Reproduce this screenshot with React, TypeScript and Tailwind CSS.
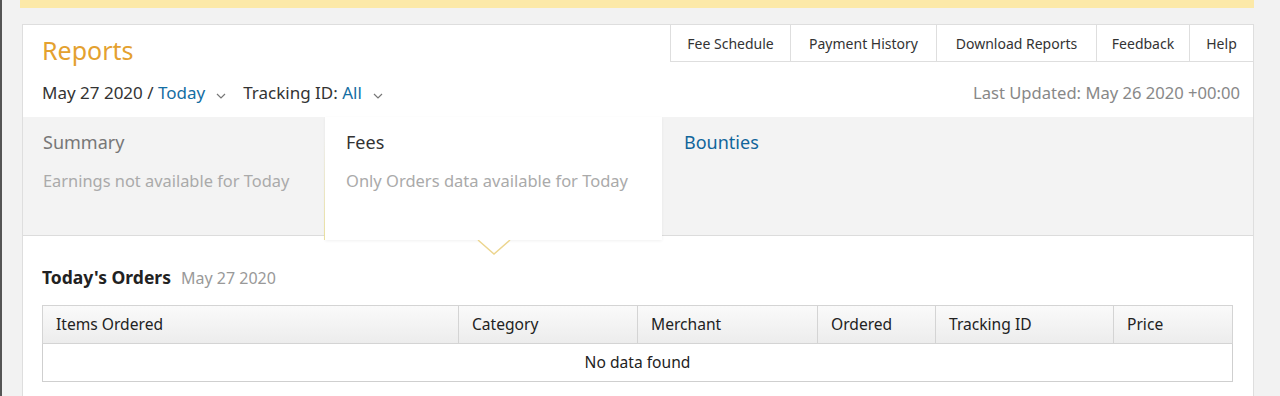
import React from 'react';

const tabs = [
  { label: 'Fee Schedule', w: 'w-[120px]' },
  { label: 'Payment History', w: 'w-[146px]' },
  { label: 'Download Reports', w: 'w-[160px]' },
  { label: 'Feedback', w: 'w-[93px]' },
  { label: 'Help', w: 'w-[64px]' },
];

const columns = [
  { label: 'Items Ordered', w: 'w-[416px]' },
  { label: 'Category', w: 'w-[179px]' },
  { label: 'Merchant', w: 'w-[180px]' },
  { label: 'Ordered', w: 'w-[118px]' },
  { label: 'Tracking ID', w: 'w-[178px]' },
  { label: 'Price', w: 'w-[119px]' },
];

function Chevron() {
  return (
    <svg width="10" height="6" viewBox="0 0 10 6" className="ml-[11px] mt-[5px]">
      <path d="M1 1l4 4 4-4" fill="none" stroke="#777" strokeWidth="1.2" />
    </svg>
  );
}

export default function App() {
  return (
    <div className="h-[396px] overflow-hidden bg-[#f2f2f2] border-l-2 border-[#555] font-['Noto_Sans',sans-serif] text-[#333]">
      <div className="ml-[18px] w-[1234px] h-[8px] bg-[#fce9a8]" />

      <div className="mt-[16px] ml-[20px] w-[1232px] pb-[40px] bg-white border border-b-0 border-[#dedede]">
        {/* header */}
        <div className="flex justify-between items-start">
          <h1 className="pl-[19px] pt-[10px] text-[25px] leading-[30px] text-[#e4a12f]">Reports</h1>
          <div className="flex">
            {tabs.map((t) => (
              <div
                key={t.label}
                className={`${t.w} h-[37px] flex items-center justify-center border-l border-b border-[#dedede] text-[14px] text-[#333]`}
              >
                {t.label}
              </div>
            ))}
          </div>
        </div>

        <div className="mt-[16px] h-[24px] flex items-center justify-between pl-[19px] pr-[13px]">
          <div className="flex items-center text-[17px]">
            <span>May 27 2020 /&nbsp;</span>
            <span className="text-[#146ea3]">Today</span>
            <Chevron />
            <span className="ml-[17px]">Tracking ID:&nbsp;</span>
            <span className="text-[#146ea3]">All</span>
            <Chevron />
          </div>
          <div className="text-[16.6px] text-[#888]">Last Updated: May 26 2020 +00:00</div>
        </div>

        {/* summary band */}
        <div className="mt-[12px] h-[119px] flex items-start bg-[#f3f3f3] border-b border-[#dcdcdc]">
          <div className="w-[302px] pl-[20px] pt-[13px]">
            <div className="text-[18px] leading-[24px] text-[#777]">Summary</div>
            <div className="mt-[15px] text-[16.4px] leading-[24px] text-[#aaa]">Earnings not available for Today</div>
          </div>
          <div className="relative w-[337px] h-[123px] bg-white pl-[21px] pt-[13px] shadow-[0_1px_3px_rgba(0,0,0,0.06)]">
            <div className="absolute left-[-1px] top-[20px] bottom-0 w-px bg-gradient-to-b from-transparent to-[#e9df9e]" />
            <div className="text-[18px] leading-[24px] text-[#333]">Fees</div>
            <div className="mt-[15px] text-[16.5px] leading-[24px] text-[#aaa]">Only Orders data available for Today</div>
            <svg
              width="34"
              height="16"
              viewBox="0 0 34 16"
              className="absolute left-1/2 -translate-x-1/2 top-full"
            >
              <path d="M1 0l16 14 16-14" fill="white" stroke="#ecd58e" strokeWidth="1.4" />
            </svg>
          </div>
          <div className="pl-[22px] pt-[13px] text-[18px] leading-[24px] text-[#11659b]">Bounties</div>
        </div>

        {/* orders */}
        <div className="pl-[19px] pr-[20px]">
          <div className="mt-[29px] flex items-baseline leading-[24px]">
            <span className="text-[17.5px] font-bold text-[#222]">Today's Orders</span>
            <span className="ml-[10px] text-[16px] text-[#999]">May 27 2020</span>
          </div>

          <table className="mt-[15px] w-[1190px] table-fixed border-collapse border border-[#cfcfcf] text-[15.6px] text-[#222]">
            <thead>
              <tr className="h-[38px] bg-gradient-to-b from-[#fafafa] to-[#ececec]">
                {columns.map((c) => (
                  <th key={c.label} className={`${c.w} border border-[#d4d4d4] pl-[13px] text-left font-normal`}>
                    {c.label}
                  </th>
                ))}
              </tr>
            </thead>
            <tbody>
              <tr className="h-[38px]">
                <td colSpan={6} className="text-center">No data found</td>
              </tr>
            </tbody>
          </table>
        </div>
      </div>
    </div>
  );
}
